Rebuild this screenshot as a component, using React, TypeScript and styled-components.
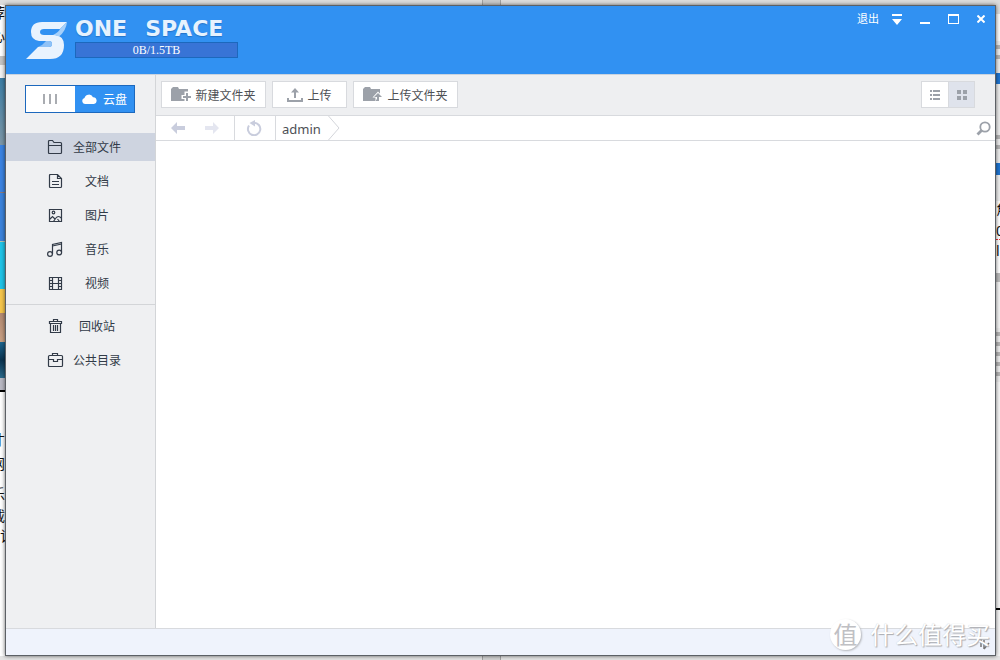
import React from "react";
import styled, { createGlobalStyle } from "styled-components";

const Global = createGlobalStyle`
  * { box-sizing: border-box; }
  html, body, #root { height: 100%; }
  body {
    margin: 0;
    background: #f4f4f4;
    color: #3b4450;
    font: 12px/16px "Noto Sans", "Noto Sans CJK SC", sans-serif;
  }
  button, input { font: inherit; color: inherit; }
  button { margin: 0; padding: 0; border: 0; background: none; cursor: pointer; }
  svg { display: block; flex: none; }
`;

const Desktop = styled.div`
  display: grid;
  grid-template-columns: 5px minmax(0, 1fr) 4px;
  grid-template-rows: 5px minmax(0, 1fr) 4px;
  height: 100vh;
  overflow: hidden;
`;

const EdgeRow = styled.div<{ $tone: string }>`
  grid-column: 1 / -1;
  display: flex;
  justify-content: center;
  background: ${(p) => p.$tone};
`;

const EdgeTab = styled.div`
  width: 19px;
  margin-right: 18px;
  border: solid #a2a2a2;
  border-width: 0 1px;
  background: rgba(0, 0, 0, 0.08);
`;

const EdgeColumn = styled.div`
  display: flex;
  flex-direction: column;
  min-width: 0;
  min-height: 0;
  overflow: hidden;
`;

const Slice = styled.div<{ $h: number; $bg: string; $right?: boolean; $wavy?: boolean }>`
  flex: none;
  display: flex;
  justify-content: ${(p) => (p.$right ? "flex-end" : "flex-start")};
  height: ${(p) => p.$h}px;
  overflow: hidden;
  background: ${(p) => p.$bg};
  border-bottom: ${(p) => (p.$wavy ? "1px dotted #e33" : "0")};
  color: #111;
  font-size: 14px;
  line-height: 16px;
  white-space: pre;
`;

const Window = styled.main`
  display: flex;
  flex-direction: column;
  min-width: 0;
  border: 1px solid #5c6065;
  background: #fff;
  box-shadow: 0 0 4px rgba(0, 0, 0, 0.6);
  z-index: 1;
`;

const Header = styled.header`
  flex: none;
  display: flex;
  justify-content: space-between;
  align-items: flex-start;
  height: 69px;
  padding: 0 8px 0 20px;
  border-bottom: 1px solid #c9d3df;
  background: #3191f2;
  color: #fff;
`;

const Brand = styled.div`
  display: flex;
  gap: 8px;
  padding-top: 12px;
`;

const BrandText = styled.div`
  display: flex;
  flex-direction: column;
  width: 163px;
`;

const Wordmark = styled.h1`
  display: flex;
  gap: 18px;
  margin: 0;
  color: #e6f2fe;
  font: 700 22px/22px "DejaVu Sans", sans-serif;
  text-shadow: 0 1px 1px rgba(10, 70, 140, 0.4);
`;

const Quota = styled.div`
  height: 16px;
  margin-top: 2px;
  border: 1px solid #1c68bd;
  background: #3874d6;
  font: 12px/14px "Liberation Serif", serif;
  text-align: center;
`;

const Controls = styled.div`
  display: flex;
  align-items: center;
  gap: 16px;
  height: 26px;
`;

const ControlButton = styled.button`
  display: flex;
  align-items: center;
  justify-content: center;
  min-width: 12px;
  height: 16px;
  font-size: 11px;

  &:first-child {
    margin-right: -4px;
  }
`;

const Body = styled.div`
  flex: 1;
  display: flex;
  min-height: 0;
`;

const Sidebar = styled.nav`
  flex: none;
  width: 150px;
  padding-top: 10px;
  border-right: 1px solid #d3d5d8;
  background: #eff0f2;
`;

const Switcher = styled.div`
  display: flex;
  width: 110px;
  height: 28px;
  margin: 0 0 20px 19px;
  border: 1px solid #1c68bd;
`;

const SwitchTab = styled.button<{ $on?: boolean }>`
  flex: ${(p) => (p.$on ? "1" : "0 0 49px")};
  display: flex;
  align-items: center;
  justify-content: center;
  gap: 6px;
  background: ${(p) => (p.$on ? "#3191f2" : "#fff")};
  color: ${(p) => (p.$on ? "#fff" : "#a9acb1")};

  span {
    padding-top: 2px;
  }
`;

const NavList = styled.ul`
  display: flex;
  flex-direction: column;
  gap: 6px;
  margin: 0;
  padding: 0;
  list-style: none;

  & + & {
    margin-top: 7px;
    padding-top: 7px;
    border-top: 1px solid #d3d5d8;
  }
`;

const NavLink = styled.a<{ $on?: boolean }>`
  display: flex;
  align-items: center;
  gap: 6px;
  height: 28px;
  padding-left: 41px;
  background: ${(p) => (p.$on ? "#ced4e0" : "transparent")};
  color: #323b48;
  text-decoration: none;

  span {
    width: 56px;
    padding-top: 2px;
    text-align: center;
  }
`;

const Content = styled.section`
  flex: 1;
  display: flex;
  flex-direction: column;
  min-width: 0;
`;

const Toolbar = styled.div`
  flex: none;
  display: flex;
  align-items: flex-start;
  gap: 6px;
  height: 41px;
  padding: 6px 20px 0 5px;
  border-bottom: 1px solid #d8dade;
  background: #eeeff1;
`;

const ToolButton = styled.button<{ $w: number }>`
  display: flex;
  align-items: center;
  justify-content: center;
  gap: 4px;
  width: ${(p) => p.$w}px;
  height: 27px;
  border: 1px solid #d8dade;
  background: #fff;
  color: #4d5055;

  span {
    padding-top: 2px;
  }
`;

const ViewModes = styled.div`
  display: flex;
  height: 27px;
  margin-left: auto;
  border: 1px solid #d8dade;
`;

const ViewButton = styled.button<{ $on?: boolean }>`
  display: flex;
  align-items: center;
  justify-content: center;
  width: 26px;
  background: ${(p) => (p.$on ? "#dfe3ec" : "#fff")};

  & + & {
    border-left: 1px solid #d8dade;
  }
`;

const PathBar = styled.div`
  flex: none;
  display: flex;
  height: 25px;
  border-bottom: 1px solid #d8dade;
`;

const PathGroup = styled.div`
  display: flex;
  align-items: center;
  gap: 18px;
  padding: 0 14px;
  border-right: 1px solid #d8dade;

  & + & {
    padding: 0 13px 0 11px;
  }
`;

const Crumb = styled.a`
  display: flex;
  align-items: center;
  gap: 7px;
  padding-left: 6px;
  color: #4d5055;
  font-size: 13px;
  text-decoration: none;

  span {
    padding-top: 2px;
  }
`;

const SearchButton = styled.button`
  margin-left: auto;
  padding-right: 4px;
`;

const FileArea = styled.div`
  flex: 1;
`;

const StatusBar = styled.footer`
  flex: none;
  display: flex;
  justify-content: flex-end;
  height: 27px;
  border-top: 1px solid #d8dade;
  background: #eff3fc;
`;

const Watermark = styled.div`
  position: absolute;
  right: 10px;
  bottom: 10px;
  z-index: 2;
  display: flex;
  align-items: center;
  gap: 9px;
  color: #fff;
  font: 400 24px/32px "Noto Sans CJK SC", sans-serif;
  text-shadow: 1px 1px 1px #a9abb0, 0 0 1px #c4c6cb;
  pointer-events: none;
`;

const Seal = styled.span`
  display: flex;
  align-items: center;
  justify-content: center;
  width: 31px;
  height: 31px;
  border-radius: 50%;
  background: #fff;
  box-shadow: 1px 1px 2px #b5b7bc;
  color: #bfc0c4;
  text-shadow: none;
`;

const Logo = () => (
  <svg width="41" height="42" viewBox="0 0 41 42" aria-hidden="true">
    <path d="M0 41L12 29H23Q26 29 26 26Q26 23 23 23H13Q5 22 5 14Q5 4 16 4H41L34 11H18Q14 11 14 14Q14 17 18 17H29Q38 18 38 27Q38 41 24 41Z" fill="#e9f3fe" />
    <path d="M41 4Q40 13 33 18.500Q31 17 27 17Q33 14 34 11Z" fill="#a6d0fa" />
    <path d="M12 29Q17 27 20 23H23Q26 23 26 26Q26 29 23 29Z" fill="#8fc2f7" />
  </svg>
);

const Cloud = () => (
  <svg width="15" height="10" viewBox="0 0 15 10" fill="#fff" aria-hidden="true">
    <path d="M3 10a3 3 0 0 1-.5-5.900A4.500 4.500 0 0 1 11 3.300 3.400 3.400 0 0 1 12 10Z" />
  </svg>
);

const Bars = () => (
  <svg width="15" height="10" viewBox="0 0 15 10" fill="#a9acb1" aria-hidden="true">
    <path d="M0 0h2v10H0zM6 0h2v10H6zM12 0h2v10h-2z" />
  </svg>
);

const navShapes: Record<string, React.ReactNode> = {
  folder: <path d="M1.500 13.500V2.500q0-1 1-1h3l1.500 2h6.500q1 0 1 1v9q0 1-1 1h-11q-1 0-1-1ZM1.500 6.500h13" />,
  doc: <path d="M2.500 1.500h8l4 4v8q0 1-1 1h-10q-1 0-1-1v-11q0-1 1-1M10.500 1.500v4h4M5 8.500h7M5 11.500h7" />,
  picture: (
    <>
      <path d="M2.500 2.500h12v12h-12zM2.500 12.500l3-3 3 3M6.500 14.500l2-3q3-4 6 0M10.500 12l2 2.500" />
      <circle cx="6.500" cy="5.500" r="1.300" />
    </>
  ),
  music: (
    <>
      <path d="M5.500 13V3.500L14.500 1.500V11M5.500 5l9-2" />
      <circle cx="3" cy="13" r="2.400" />
      <circle cx="12.200" cy="11.500" r="2.400" />
    </>
  ),
  film: <path d="M2.500 2.500h12v12h-12zM5.500 2.500v12M11.500 2.500v12M5.500 8.500h6M2.500 5.500h3M2.500 8.500h3M2.500 11.500h3M11.500 5.500h3M11.500 8.500h3M11.500 11.500h3" />,
  trash: <path d="M2.500 3.500h12v2h-12ZM3.500 5.500v9h10v-9M6.500 3.500v-2h4v2M6.500 7v6M8.500 7v6M10.500 7v6" />,
  box: <path d="M1.500 4.500q0-1 1-1h12q1 0 1 1v9q0 1-1 1h-12q-1 0-1-1ZM5.500 3.500v-2h5v2M1.500 7.500h5M10.500 7.500h5M6.500 7v2.500h4V7" />,
};

const NavIcon = ({ name }: { name: string }) => (
  <svg width="16" height="16" viewBox="0 0 16 16" fill="none" stroke="#323b48" strokeWidth="1.200" overflow="visible" aria-hidden="true">
    {navShapes[name]}
  </svg>
);

const FolderPlus = () => (
  <svg width="20" height="15" viewBox="0 0 20 15" aria-hidden="true">
    <path d="M0 2L2 0h5l1 2h9v12H0Z" fill="#9ca1a9" />
    <path d="M15.500 4.500v10M10.500 10h9.500" stroke="#fff" strokeWidth="4" />
    <path d="M16 6v8M12 10h8" stroke="#9ca1a9" strokeWidth="2" />
  </svg>
);

const FolderUp = () => (
  <svg width="20" height="15" viewBox="0 0 20 15" aria-hidden="true">
    <path d="M0 2L2 0h5l1 2h9v12H0Z" fill="#9ca1a9" />
    <path d="M15 4.500l5.500 6H17.500V15h-5v-4.500H9.500Z" fill="#fff" />
    <path d="M15 6l4 4h-3v4h-3v-1.500h1V10h-3Z" fill="#9ca1a9" />
  </svg>
);

const UploadIcon = () => (
  <svg width="16" height="14" viewBox="0 0 16 14" fill="#9ca1a9" aria-hidden="true">
    <path d="M8 0l4 4.500H9V10H7V4.500H4ZM0 10h2v2h12v-2h2v4H0Z" />
  </svg>
);

const ArrowIcon = ({ forward }: { forward?: boolean }) => (
  <svg width="16" height="12" viewBox="0 0 16 12" fill={forward ? "#e4e6f0" : "#c9cddd"} aria-hidden="true">
    <path d={forward ? "M15 6L9 0v4H1v4h8v4Z" : "M1 6l6-6v4h8v4H7v4Z"} />
  </svg>
);

const RefreshIcon = () => (
  <svg width="16" height="16" viewBox="0 0 16 16" aria-hidden="true">
    <path d="M3 5.500A6.200 6.200 0 1 0 8 2.800" fill="none" stroke="#c9cddd" strokeWidth="2" />
    <path d="M3.500 3L9 0v6.500Z" fill="#c9cddd" />
  </svg>
);

const primary = [
  { icon: "folder", label: "全部文件" },
  { icon: "doc", label: "文档" },
  { icon: "picture", label: "图片" },
  { icon: "music", label: "音乐" },
  { icon: "film", label: "视频" },
];
const secondary = [
  { icon: "trash", label: "回收站" },
  { icon: "box", label: "公共目录" },
];

const NavGroup = ({ items }: { items: { icon: string; label: string }[] }) => (
  <NavList>
    {items.map((item) => (
      <li key={item.label}>
        <NavLink href="#" $on={item.icon === "folder"}>
          <NavIcon name={item.icon} />
          <span>{item.label}</span>
        </NavLink>
      </li>
    ))}
  </NavList>
);

const faintLines = "repeating-linear-gradient(#ececec 0 4px, #b4b4b4 4px 8px, #ececec 8px 10px)";

export default function App() {
  return (
    <>
      <Global />
      <Desktop>
        <EdgeRow $tone="#dcdcdc"><EdgeTab /></EdgeRow>
        <EdgeColumn aria-hidden="true">
          <Slice $h={23} $bg="#fff" $right>荐</Slice>
          <Slice $h={28} $bg="#fff" $right>心</Slice>
          <Slice $h={9} $bg="#c4c4c4" />
          <Slice $h={13} $bg="#f2f2f2" />
          <Slice $h={67} $bg="linear-gradient(#3c7ea6, #7d97a8)" />
          <Slice $h={47} $bg="#3b83e2" />
          <Slice $h={1} $bg="#8b7b7b" />
          <Slice $h={48} $bg="#3b83dc" />
          <Slice $h={1} $bg="#b7c4b0" />
          <Slice $h={47} $bg="#1fc4e8" />
          <Slice $h={24} $bg="#f6c64c" />
          <Slice $h={29} $bg="linear-gradient(#b38a72, #c9a184)" />
          <Slice $h={36} $bg="linear-gradient(#1d6690, #0a3350 50%, #2b6a8c)" />
          <Slice $h={12} $bg="#b9b9c4" />
          <Slice $h={2} $bg="#000" />
          <Slice $h={40} $bg="#fff" />
          <Slice $h={24} $bg="#fff" $right>才</Slice>
          <Slice $h={30} $bg="#fff" $right>网</Slice>
          <Slice $h={22} $bg="#fff" $right>乐</Slice>
          <Slice $h={20} $bg="#fff" $right>载</Slice>
          <Slice $h={130} $bg="#fff">记</Slice>
        </EdgeColumn>
        <Window>
          <Header>
            <Brand>
              <Logo />
              <BrandText>
                <Wordmark aria-label="ONE SPACE"><span>ONE</span><span>SPACE</span></Wordmark>
                <Quota>0B/1.5TB</Quota>
              </BrandText>
            </Brand>
            <Controls>
              <ControlButton>退出</ControlButton>
              <ControlButton aria-label="菜单">
                <svg width="12" height="11" viewBox="0 0 12 11" fill="#fff"><path d="M1 0h10v2H1zM1 5h10l-5 6Z" /></svg>
              </ControlButton>
              <ControlButton aria-label="最小化">
                <svg width="10" height="11" viewBox="0 0 10 11" fill="#fff"><path d="M0 8h10v2H0z" /></svg>
              </ControlButton>
              <ControlButton aria-label="最大化">
                <svg width="12" height="10" viewBox="0 0 12 10" fill="#fff" fillRule="evenodd"><path d="M1 0h11v10H1zM2 2v7h9V2z" /></svg>
              </ControlButton>
              <ControlButton aria-label="关闭">
                <svg width="8" height="8" viewBox="0 0 8 8" stroke="#fff" strokeWidth="2"><path d="M0.500 0.500l7 7M7.500 0.500l-7 7" /></svg>
              </ControlButton>
            </Controls>
          </Header>
          <Body>
            <Sidebar>
              <Switcher>
                <SwitchTab aria-label="本地"><Bars /></SwitchTab>
                <SwitchTab $on><Cloud /><span>云盘</span></SwitchTab>
              </Switcher>
              <NavGroup items={primary} />
              <NavGroup items={secondary} />
            </Sidebar>
            <Content>
              <Toolbar>
                <ToolButton $w={105}><FolderPlus /><span>新建文件夹</span></ToolButton>
                <ToolButton $w={75}><UploadIcon /><span>上传</span></ToolButton>
                <ToolButton $w={105}><FolderUp /><span>上传文件夹</span></ToolButton>
                <ViewModes>
                  <ViewButton aria-label="列表">
                    <svg width="10" height="10" viewBox="0 0 10 10" fill="#9ca1a9"><path d="M0 0h2v2H0zM3 0h7v2H3zM0 4h2v2H0zM3 4h7v2H3zM0 8h2v2H0zM3 8h7v2H3z" /></svg>
                  </ViewButton>
                  <ViewButton $on aria-label="缩略图">
                    <svg width="10" height="10" viewBox="0 0 10 10" fill="#9ca1a9"><path d="M0 0h4v4H0zM6 0h4v4H6zM0 6h4v4H0zM6 6h4v4H6z" /></svg>
                  </ViewButton>
                </ViewModes>
              </Toolbar>
              <PathBar>
                <PathGroup>
                  <button aria-label="后退"><ArrowIcon /></button>
                  <button aria-label="前进"><ArrowIcon forward /></button>
                </PathGroup>
                <PathGroup>
                  <button aria-label="刷新"><RefreshIcon /></button>
                </PathGroup>
                <Crumb href="#">
                  <span>admin</span>
                  <svg width="12" height="24" viewBox="0 0 12 24" fill="none" stroke="#d3d5da"><path d="M0.500 0L11 12L0.500 24" /></svg>
                </Crumb>
                <SearchButton aria-label="搜索">
                  <svg width="15" height="15" viewBox="0 0 15 15" fill="none" stroke="#9ca1a9">
                    <circle cx="9" cy="6" r="4.700" strokeWidth="1.800" />
                    <path d="M5.500 9.500L1.500 13.500" strokeWidth="2.800" />
                  </svg>
                </SearchButton>
              </PathBar>
              <FileArea />
            </Content>
          </Body>
          <StatusBar>
            <svg width="22" height="26" viewBox="0 0 22 26" fill="none" stroke="#777" strokeWidth="1.500" aria-hidden="true">
              <path d="M3 12h5M8 8v10M11 11v9M11 20l5-6" />
            </svg>
          </StatusBar>
        </Window>
        <EdgeColumn aria-hidden="true">
          <Slice $h={9} $bg="#ddd" />
          <Slice $h={27} $bg="#fafafa" />
          <Slice $h={20} $bg={faintLines} />
          <Slice $h={12} $bg="#ececec" />
          <Slice $h={11} $bg="#1f74cf" />
          <Slice $h={47} $bg="#ececec" />
          <Slice $h={20} $bg={faintLines} />
          <Slice $h={12} $bg="#ececec" />
          <Slice $h={12} $bg="#1f74cf" />
          <Slice $h={26} $bg="#eee" />
          <Slice $h={22} $bg="#fff">角</Slice>
          <Slice $h={17} $bg="#fff" $wavy>0</Slice>
          <Slice $h={3} $bg="#fff" />
          <Slice $h={30} $bg="#fff">l.</Slice>
          <Slice $h={9} $bg="#bbb" />
          <Slice $h={46} $bg="#f4f4f4" />
          <Slice $h={54} $bg={faintLines} />
          <Slice $h={226} $bg="#f6f6f6" />
          <Slice $h={2} $bg="#000" />
          <Slice $h={50} $bg="#f6f6f6" />
        </EdgeColumn>
        <EdgeRow $tone="#e4e4e4"><EdgeTab /></EdgeRow>
      </Desktop>
      <Watermark><Seal>值</Seal>什么值得买</Watermark>
    </>
  );
}
